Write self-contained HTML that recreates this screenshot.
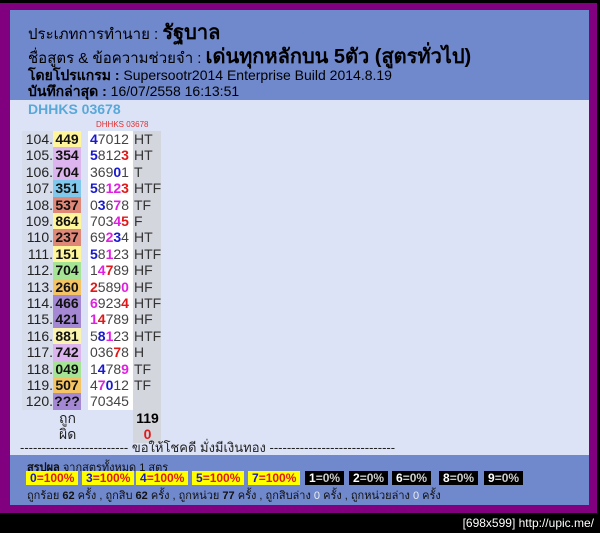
<!DOCTYPE html>
<html><head><meta charset="utf-8"><style>
*{margin:0;padding:0;box-sizing:border-box}
body{width:600px;height:533px;background:#000;position:relative;overflow:hidden;font-family:"Liberation Sans","DejaVu Sans",sans-serif;}
#frame{position:absolute;left:0;top:3px;width:597px;height:510px;background:#800080;}
#head{position:absolute;left:10px;top:10px;width:579px;height:90px;background:#7088cc;color:#000;}
#body{position:absolute;left:10px;top:100px;width:579px;height:355px;background:#dde3f7;}
#sum{position:absolute;left:10px;top:455px;width:579px;height:50px;background:#7088cc;}
.abs{position:absolute;white-space:nowrap}
.row{position:absolute;left:12px;height:17px;font-size:14px;line-height:17px}
.n{position:absolute;left:0;width:31px;text-align:right;color:#222;background:#d8ddec}
.c{position:absolute;left:31px;width:28px;text-align:center;font-weight:bold;color:#111}
.d{position:absolute;left:66px;width:45px;background:#fff;color:#444;padding-left:2px}
.l{position:absolute;left:111px;width:28px;background:#d4d6de;color:#333;padding-left:1px}
.b{color:#1818d0;font-weight:bold}.r{color:#e01818;font-weight:bold}.m{color:#e020e0;font-weight:bold}
.y{background:#fff59a}.p{background:#dcb4ee}.s{background:#80c8ec}.o{background:#e08878}.g{background:#a4e494}.or{background:#f4c464}.v{background:#a488d4}.py{background:#fbf4b0}
.bx{position:absolute;top:471px;height:14px;font-size:12px;line-height:14px;font-weight:bold;padding:0 4px}
.yb{background:#ffff00;color:#e01818}.yb i{color:#1818c0;font-style:normal}
.kb{background:#000;color:#ccc}.kb i{color:#fff;font-style:normal}
</style></head><body>
<div id="frame"></div>
<div id="head">
<div class="abs" style="left:18px;top:6px;font-size:15px">ประเภทการทำนาย : <b style="font-size:20px">รัฐบาล</b></div>
<div class="abs" style="left:18px;top:30px;font-size:15px">ชื่อสูตร &amp; ข้อความช่วยจำ : <b style="font-size:20px">เด่นทุกหลักบน 5ตัว (สูตรทั่วไป)</b></div>
<div class="abs" style="left:18px;top:55px;font-size:14px"><b>โดยโปรแกรม :</b> Supersootr2014 Enterprise Build 2014.8.19</div>
<div class="abs" style="left:18px;top:71px;font-size:14px"><b>บันทึกล่าสุด :</b> 16/07/2558 16:13:51</div>
</div>
<div id="body">
<div class="abs" style="left:18px;top:1px;font-size:14px;font-weight:bold;color:#58a8d8">DHHKS 03678</div>
<div class="abs" style="left:86px;top:20px;font-size:8px;color:#e03030">DHHKS 03678</div>
</div>
<div id="sum"></div>
<div style="position:absolute;left:10px;top:131px">
<div class="row" style="top:0"><span class="n">104.</span><span class="c y">449</span><span class="d"><span class="b">4</span>7012</span><span class="l">HT</span></div>
<div class="row" style="top:16.4px"><span class="n">105.</span><span class="c p">354</span><span class="d"><span class="b">5</span>812<span class="r">3</span></span><span class="l">HT</span></div>
<div class="row" style="top:32.8px"><span class="n">106.</span><span class="c p">704</span><span class="d">369<span class="b">0</span>1</span><span class="l">T</span></div>
<div class="row" style="top:49.2px"><span class="n">107.</span><span class="c s">351</span><span class="d"><span class="b">5</span>8<span class="m">12</span><span class="r">3</span></span><span class="l">HTF</span></div>
<div class="row" style="top:65.6px"><span class="n">108.</span><span class="c o">537</span><span class="d">0<span class="b">3</span>6<span class="m">7</span>8</span><span class="l">TF</span></div>
<div class="row" style="top:82px"><span class="n">109.</span><span class="c y">864</span><span class="d">703<span class="m">4</span><span class="r">5</span></span><span class="l">F</span></div>
<div class="row" style="top:98.4px"><span class="n">110.</span><span class="c o">237</span><span class="d">69<span class="m">2</span><span class="b">3</span>4</span><span class="l">HT</span></div>
<div class="row" style="top:114.8px"><span class="n">111.</span><span class="c y">151</span><span class="d"><span class="b">5</span>8<span class="m">1</span>23</span><span class="l">HTF</span></div>
<div class="row" style="top:131.2px"><span class="n">112.</span><span class="c g">704</span><span class="d">1<span class="m">4</span><span class="r">7</span>89</span><span class="l">HF</span></div>
<div class="row" style="top:147.6px"><span class="n">113.</span><span class="c or">260</span><span class="d"><span class="r">2</span>589<span class="m">0</span></span><span class="l">HF</span></div>
<div class="row" style="top:164px"><span class="n">114.</span><span class="c v">466</span><span class="d"><span class="m">6</span>923<span class="r">4</span></span><span class="l">HTF</span></div>
<div class="row" style="top:180.4px"><span class="n">115.</span><span class="c v">421</span><span class="d"><span class="m">1</span><span class="r">4</span>789</span><span class="l">HF</span></div>
<div class="row" style="top:196.8px"><span class="n">116.</span><span class="c py">881</span><span class="d">5<span class="b">8</span><span class="m">1</span>23</span><span class="l">HTF</span></div>
<div class="row" style="top:213.2px"><span class="n">117.</span><span class="c p">742</span><span class="d">036<span class="r">7</span>8</span><span class="l">H</span></div>
<div class="row" style="top:229.6px"><span class="n">118.</span><span class="c g">049</span><span class="d">1<span class="b">4</span>78<span class="m">9</span></span><span class="l">TF</span></div>
<div class="row" style="top:246px"><span class="n">119.</span><span class="c or">507</span><span class="d">4<span class="m">7</span><span class="b">0</span>12</span><span class="l">TF</span></div>
<div class="row" style="top:262.4px"><span class="n">120.</span><span class="c v">???</span><span class="d">70345</span><span class="l" style="background:#d4d6de">&nbsp;</span></div>
<div class="row" style="top:278.8px"><span style="position:absolute;left:37px;color:#222">ถูก</span><span class="l" style="font-weight:bold;color:#000;text-align:center">119</span></div>
<div class="row" style="top:295.2px"><span style="position:absolute;left:37px;color:#222">ผิด</span><span class="l" style="font-weight:bold;color:#e01818;text-align:center">0</span></div>
</div>
<div class="abs" style="left:20px;top:437px;font-size:13px;color:#222">------------------------- ขอให้โชคดี มั่งมีเงินทอง -----------------------------</div>
<div class="abs" style="left:27px;top:458px;font-size:11px;color:#111"><b>สรุปผล</b> จากสูตรทั้งหมด 1 สูตร</div>
<div class="bx yb" style="left:26px"><i>0</i>=100%</div>
<div class="bx yb" style="left:82px"><i>3</i>=100%</div>
<div class="bx yb" style="left:136px"><i>4</i>=100%</div>
<div class="bx yb" style="left:192px"><i>5</i>=100%</div>
<div class="bx yb" style="left:248px"><i>7</i>=100%</div>
<div class="bx kb" style="left:305px"><i>1</i>=0%</div>
<div class="bx kb" style="left:349px"><i>2</i>=0%</div>
<div class="bx kb" style="left:392px"><i>6</i>=0%</div>
<div class="bx kb" style="left:439px"><i>8</i>=0%</div>
<div class="bx kb" style="left:484px"><i>9</i>=0%</div>
<div class="abs" style="left:27px;top:486px;font-size:11px;color:#111">ถูกร้อย <b>62</b> ครั้ง , ถูกสิบ <b>62</b> ครั้ง , ถูกหน่วย <b>77</b> ครั้ง , ถูกสิบล่าง <span style="color:#eee">0</span> ครั้ง , ถูกหน่วยล่าง <span style="color:#eee">0</span> ครั้ง</div>
<div class="abs" style="right:6px;top:516px;font-size:12px;color:#fff">[698x599] http://upic.me/</div>
</body></html>
